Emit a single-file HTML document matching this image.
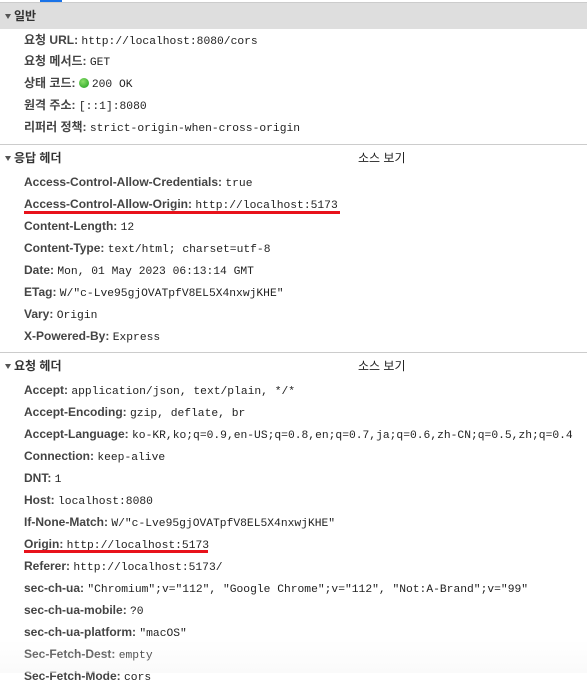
<!DOCTYPE html>
<html><head><meta charset="utf-8"><style>
body{margin:0;width:587px;height:673px;overflow:hidden;background:#fff;font-family:"Liberation Sans","Noto Sans CJK KR",sans-serif;font-size:12px;color:#222;position:relative}
.tab{position:absolute;left:40px;top:0;width:22px;height:2px;background:#1a73e8}
.topline{position:absolute;left:0;top:2px;width:587px;height:1px;background:#ccc}
.sec{position:absolute;left:0;width:587px;height:26px;line-height:26px;font-weight:bold;color:#333}
.sec .tri{display:inline-block;width:0;height:0;border-left:3.5px solid transparent;border-right:3.5px solid transparent;border-top:5px solid #555;margin:0 3px 1px 5px}
.sec .src{position:absolute;left:358px;top:0;font-weight:normal;color:#222}
.div{position:absolute;left:0;width:587px;height:1px;background:#ccc}
.r{position:absolute;left:24px;white-space:nowrap;height:22px;line-height:22px}
.r b{color:#444;font-weight:bold}
.r span{font-family:"Liberation Mono",monospace;font-size:11.3px;color:#222}
.ul{position:absolute;left:24px;height:3px;background:#e8121b}
.dot{display:inline-block;width:10px;height:10px;border-radius:50%;background:radial-gradient(circle at 40% 35%,#8be06a,#1a9b1a);vertical-align:-1px;margin-right:3px}
.fade{position:absolute;left:0;top:640px;width:587px;height:33px;background:linear-gradient(rgba(255,255,255,0),rgba(245,245,245,0.5))}
</style></head><body>
<div class="tab"></div><div class="topline"></div>
<div class="sec" style="top:3px;background:#dedede"><i class="tri"></i>일반</div>
<div class="r" style="top:29px"><b>요청 URL:</b> <span>http://localhost:8080/cors</span></div>
<div class="r" style="top:50px"><b>요청 메서드:</b> <span>GET</span></div>
<div class="r" style="top:72px"><b>상태 코드:</b> <i class="dot"></i><span>200 OK</span></div>
<div class="r" style="top:94px"><b>원격 주소:</b> <span>[::1]:8080</span></div>
<div class="r" style="top:116px"><b>리퍼러 정책:</b> <span>strict-origin-when-cross-origin</span></div>
<div class="div" style="top:144px"></div>
<div class="sec" style="top:145px"><i class="tri"></i>응답 헤더<span class="src">소스 보기</span></div>
<div class="r" style="top:171px"><b>Access-Control-Allow-Credentials:</b> <span>true</span></div>
<div class="r" style="top:193px"><b>Access-Control-Allow-Origin:</b> <span>http://localhost:5173</span></div>
<div class="ul" style="top:211px;width:316px"></div>
<div class="r" style="top:215px"><b>Content-Length:</b> <span>12</span></div>
<div class="r" style="top:237px"><b>Content-Type:</b> <span>text/html; charset=utf-8</span></div>
<div class="r" style="top:259px"><b>Date:</b> <span>Mon, 01 May 2023 06:13:14 GMT</span></div>
<div class="r" style="top:281px"><b>ETag:</b> <span>W/"c-Lve95gjOVATpfV8EL5X4nxwjKHE"</span></div>
<div class="r" style="top:303px"><b>Vary:</b> <span>Origin</span></div>
<div class="r" style="top:325px"><b>X-Powered-By:</b> <span>Express</span></div>
<div class="div" style="top:352px"></div>
<div class="sec" style="top:353px"><i class="tri"></i>요청 헤더<span class="src">소스 보기</span></div>
<div class="r" style="top:379px"><b>Accept:</b> <span>application/json, text/plain, */*</span></div>
<div class="r" style="top:401px"><b>Accept-Encoding:</b> <span>gzip, deflate, br</span></div>
<div class="r" style="top:423px"><b>Accept-Language:</b> <span>ko-KR,ko;q=0.9,en-US;q=0.8,en;q=0.7,ja;q=0.6,zh-CN;q=0.5,zh;q=0.4</span></div>
<div class="r" style="top:445px"><b>Connection:</b> <span>keep-alive</span></div>
<div class="r" style="top:467px"><b>DNT:</b> <span>1</span></div>
<div class="r" style="top:489px"><b>Host:</b> <span>localhost:8080</span></div>
<div class="r" style="top:511px"><b>If-None-Match:</b> <span>W/"c-Lve95gjOVATpfV8EL5X4nxwjKHE"</span></div>
<div class="r" style="top:533px"><b>Origin:</b> <span>http://localhost:5173</span></div>
<div class="ul" style="top:550px;width:184px"></div>
<div class="r" style="top:555px"><b>Referer:</b> <span>http://localhost:5173/</span></div>
<div class="r" style="top:577px"><b>sec-ch-ua:</b> <span>"Chromium";v="112", "Google Chrome";v="112", "Not:A-Brand";v="99"</span></div>
<div class="r" style="top:599px"><b>sec-ch-ua-mobile:</b> <span>?0</span></div>
<div class="r" style="top:621px"><b>sec-ch-ua-platform:</b> <span>"macOS"</span></div>
<div class="r" style="top:643px"><b>Sec-Fetch-Dest:</b> <span>empty</span></div>
<div class="r" style="top:665px"><b>Sec-Fetch-Mode:</b> <span>cors</span></div>
<div class="fade"></div>
</body></html>
